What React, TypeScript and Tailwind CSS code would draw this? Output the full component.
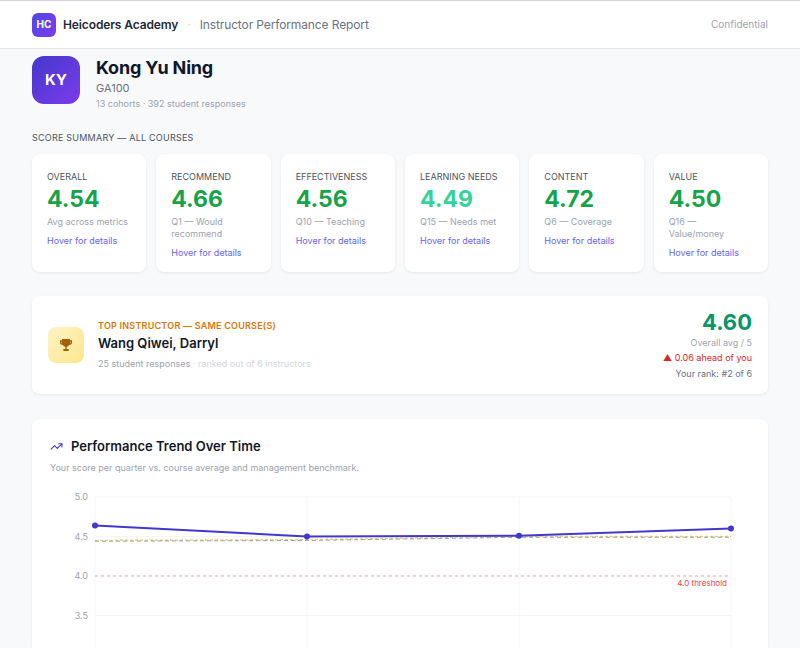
export default function App() {
  const cards = [
    ["OVERALL", "4.54", "Avg across metrics", "text-[#16a34a]"],
    ["RECOMMEND", "4.66", "Q1 — Would recommend", "text-[#16a34a]"],
    ["EFFECTIVENESS", "4.56", "Q10 — Teaching", "text-[#16a34a]"],
    ["LEARNING NEEDS", "4.49", "Q15 — Needs met", "text-[#34d399]"],
    ["CONTENT", "4.72", "Q6 — Coverage", "text-[#16a34a]"],
    ["VALUE", "4.50", "Q16 — Value/money", "text-[#16a34a]"],
  ];
  const y = (v: number) => 10 + (5 - v) * 79;
  const xs = [45, 257, 469, 681];
  const me = [4.64, 4.5, 4.51, 4.6];
  return (
    <div className="min-h-[648px] bg-[#f8f9fb] text-[#111827]" style={{ fontFamily: "Inter, 'Noto Sans', sans-serif" }}>
      <div className="h-[49px] bg-white border-b border-[#e5e7eb] border-t border-t-[#d1d5db] flex items-center px-8">
        <div className="w-6 h-6 rounded-md bg-gradient-to-br from-[#4f46e5] to-[#7c3aed] text-white text-[10px] font-bold flex items-center justify-center">HC</div>
        <span className="ml-[7px] text-[12px] font-semibold text-[#1f2937] tracking-[-0.01em]">Heicoders Academy</span>
        <span className="mx-[9px] text-[#d1d5db] text-xs">·</span>
        <span className="text-[12px] text-[#6b7280] tracking-[-0.01em]">Instructor Performance Report</span>
        <span className="ml-auto text-[10px] text-[#9ca3af]">Confidential</span>
      </div>
      <div className="px-8">
        <div className="flex items-start gap-4 pt-[7px]">
          <div className="w-12 h-12 rounded-xl bg-gradient-to-br from-[#4338ca] to-[#7c3aed] text-white font-bold text-[15px] flex items-center justify-center">KY</div>
          <div>
            <div className="text-[18px] font-bold leading-[24px] text-[#0f172a] tracking-[-0.01em]">Kong Yu Ning</div>
            <div className="text-[11px] text-[#6b7280] leading-[14px] mt-[1px]">GA100</div>
            <div className="text-[9px] text-[#9ca3af] leading-[12px] mt-[3px]">13 cohorts · 392 student responses</div>
          </div>
        </div>
        <div className="mt-[21px] text-[9px] tracking-wide text-[#4b5563]">SCORE SUMMARY — ALL COURSES</div>
        <div className="mt-[9px] grid grid-cols-6 gap-[10px]">
          {cards.map(([t, v, d, c]) => (
            <div key={t} className="bg-white rounded-lg shadow-[0_1px_3px_rgba(0,0,0,0.08)] h-[118px] px-[15px] pt-[16px]">
              <div className="text-[9px] text-[#4b5563] whitespace-nowrap">{t}</div>
              <div className={`text-[23px] font-bold leading-[28px] mt-[2px] ${c}`}>{v}</div>
              <div className="text-[9px] text-[#9ca3af] leading-[12px] mt-[3px]">{d}</div>
              <div className="text-[9px] text-[#6366f1] mt-[6px]">Hover for details</div>
            </div>
          ))}
        </div>
        <div className="mt-[24px] bg-white rounded-lg shadow-[0_1px_3px_rgba(0,0,0,0.08)] h-[98px] flex items-center px-4">
          <div className="w-9 h-9 rounded-lg bg-gradient-to-br from-[#fef3c7] to-[#fde68a] flex items-center justify-center text-[#a16207]">
            <svg width="16" height="16" viewBox="0 0 24 24" fill="currentColor"><path d="M6 3h12v2h3v3a4 4 0 0 1-4 4h-.4A5 5 0 0 1 13 15v3h3v3H8v-3h3v-3a5 5 0 0 1-3.6-3H7a4 4 0 0 1-4-4V5h3V3zm0 4H5v1a2 2 0 0 0 1 1.7V7zm12 0v2.7A2 2 0 0 0 19 8V7h-1z"/></svg>
          </div>
          <div className="ml-[14px]">
            <div className="text-[9px] font-semibold tracking-wide text-[#d97706]">TOP INSTRUCTOR — SAME COURSE(S)</div>
            <div className="text-[13px] font-semibold text-[#111827] mt-[2px]">Wang Qiwei, Darryl</div>
            <div className="text-[9px] text-[#9ca3af] mt-[3px]">25 student responses <span className="text-[#d1d5db]">· ranked out of 6 instructors</span></div>
          </div>
          <div className="ml-auto text-right">
            <div className="text-[22px] font-bold text-[#059669] leading-[26px]">4.60</div>
            <div className="text-[9px] text-[#9ca3af] mt-[1px]">Overall avg / 5</div>
            <div className="text-[9px] text-[#dc2626] mt-[2px]">▲ 0.06 ahead of you</div>
            <div className="text-[9px] text-[#6b7280] mt-[2px]">Your rank: #2 of 6</div>
          </div>
        </div>
        <div className="mt-[25px] bg-white rounded-t-lg shadow-[0_1px_3px_rgba(0,0,0,0.08)] h-[230px] px-[18px] pt-[18px]">
          <div className="flex items-center gap-2">
            <svg width="13" height="13" viewBox="0 0 24 24" fill="none" stroke="#4338ca" strokeWidth="2" strokeLinecap="round" strokeLinejoin="round"><path d="M22 7l-8.5 8.5-5-5L2 17"/><path d="M16 7h6v6"/></svg>
            <span className="text-[13px] font-semibold text-[#111827]">Performance Trend Over Time</span>
          </div>
          <div className="text-[9px] text-[#9ca3af] mt-[5px]">Your score per quarter vs. course average and management benchmark.</div>
          <svg width="700" height="170" className="mt-[12px]" style={{ fontFamily: "Inter, sans-serif" }}>
            {[5, 4.5, 4, 3.5].map((v) => (
              <g key={v}>
                <line x1="45" x2="681" y1={y(v)} y2={y(v)} stroke="#f1f5f9" />
                <text x="38" y={y(v) + 3} fontSize="9" fill="#9ca3af" textAnchor="end">{v.toFixed(1)}</text>
              </g>
            ))}
            {xs.map((x) => <line key={x} x1={x} x2={x} y1="10" y2="170" stroke="#f1f5f9" />)}
            <line x1="45" x2="681" y1={y(4)} y2={y(4)} stroke="#fca5a5" strokeDasharray="3 3" />
            <text x="677" y={y(4) + 10} fontSize="8" fill="#ef4444" textAnchor="end">4.0 threshold</text>
            <polyline points={`45,${y(4.45)} 257,${y(4.46)} 469,${y(4.5)} 681,${y(4.5)}`} fill="none" stroke="#eab308" strokeOpacity="0.6" strokeWidth="1.5" strokeDasharray="3 2" />
            <polyline points={`45,${y(4.44)} 257,${y(4.45)} 469,${y(4.49)} 681,${y(4.49)}`} fill="none" stroke="#94a3b8" strokeWidth="1" strokeDasharray="4 3" />
            <polyline points={me.map((v, i) => `${xs[i]},${y(v)}`).join(" ")} fill="none" stroke="#4338ca" strokeWidth="2" />
            {me.map((v, i) => <circle key={i} cx={xs[i]} cy={y(v)} r="3" fill="#4338ca" />)}
          </svg>
        </div>
      </div>
    </div>
  );
}
